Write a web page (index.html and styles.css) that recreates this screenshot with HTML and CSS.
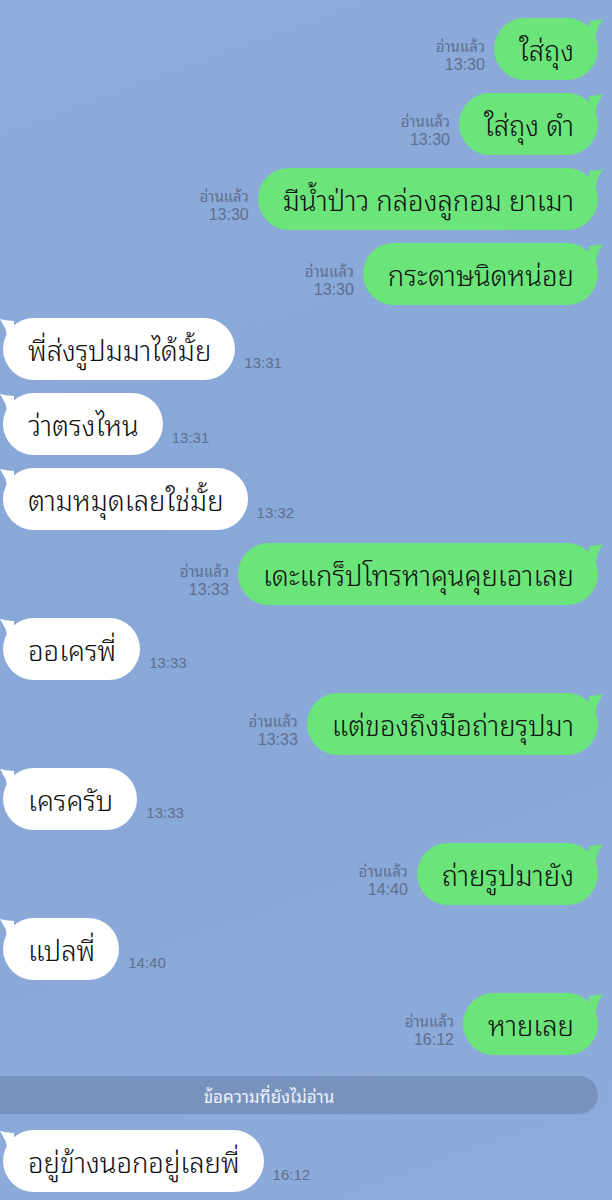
FILE: index.html
```html
<!DOCTYPE html>
<html lang="th">
<head>
  <meta charset="UTF-8" />
  <meta name="viewport" content="width=device-width, initial-scale=1.0" />
  <title>LINE</title>
  <link rel="stylesheet" href="styles.css">
</head>
<body>
  <div class="chat">
    <div class="row out">
      <div class="meta"><span>อ่านแล้ว</span><span>13:30</span></div>
      <div class="bubble">ใส่ถุง</div>
    </div>
    <div class="row out">
      <div class="meta"><span>อ่านแล้ว</span><span>13:30</span></div>
      <div class="bubble">ใส่ถุง ดำ</div>
    </div>
    <div class="row out">
      <div class="meta"><span>อ่านแล้ว</span><span>13:30</span></div>
      <div class="bubble">มีน้ำป่าว กล่องลูกอม ยาเมา</div>
    </div>
    <div class="row out">
      <div class="meta"><span>อ่านแล้ว</span><span>13:30</span></div>
      <div class="bubble">กระดาษนิดหน่อย</div>
    </div>
    <div class="row in">
      <div class="bubble">พี่ส่งรูปมมาได้มั้ย</div>
      <div class="time">13:31</div>
    </div>
    <div class="row in">
      <div class="bubble">ว่าตรงไหน</div>
      <div class="time">13:31</div>
    </div>
    <div class="row in">
      <div class="bubble">ตามหมุดเลยใช่มั้ย</div>
      <div class="time">13:32</div>
    </div>
    <div class="row out">
      <div class="meta"><span>อ่านแล้ว</span><span>13:33</span></div>
      <div class="bubble">เดะแกร็ปโทรหาคุนคุยเอาเลย</div>
    </div>
    <div class="row in">
      <div class="bubble">ออเครพี่</div>
      <div class="time">13:33</div>
    </div>
    <div class="row out">
      <div class="meta"><span>อ่านแล้ว</span><span>13:33</span></div>
      <div class="bubble">แต่ของถึงมือถ่ายรุปมา</div>
    </div>
    <div class="row in">
      <div class="bubble">เครครับ</div>
      <div class="time">13:33</div>
    </div>
    <div class="row out">
      <div class="meta"><span>อ่านแล้ว</span><span>14:40</span></div>
      <div class="bubble">ถ่ายรูปมายัง</div>
    </div>
    <div class="row in">
      <div class="bubble">แปลพี่</div>
      <div class="time">14:40</div>
    </div>
    <div class="row out">
      <div class="meta"><span>อ่านแล้ว</span><span>16:12</span></div>
      <div class="bubble">หายเลย</div>
    </div>
    <div class="unread">ข้อความที่ยังไม่อ่าน</div>
    <div class="row in">
      <div class="bubble">อยู่ข้างนอกอยู่เลยพี่</div>
      <div class="time">16:12</div>
    </div>
  </div>
</body>
</html>
```

FILE: styles.css
```css
body {
  margin: 0;
  height: 1200px;
  overflow: hidden;
  font-family: "Noto Sans Thai Looped", "Noto Serif Thai", "Noto Sans Thai", "Noto Sans", sans-serif;
  background: linear-gradient(160deg, #8eacdb 0%, #88a8d8 40%, #8aa9d8 70%, #8eacda 100%);
}
.chat {
  display: flex;
  flex-direction: column;
  gap: 13px;
  padding-top: 18px;
}
.row {
  display: flex;
  align-items: flex-end;
  gap: 9px;
}
.row.out {
  justify-content: flex-end;
  padding-right: 14px;
}
.row.in {
  padding-left: 3px;
}
.bubble {
  position: relative;
  height: 62px;
  box-sizing: border-box;
  padding: 0 24px 0 25px;
  border-radius: 31px;
  display: flex;
  align-items: center;
  font-size: 27.5px;
  font-weight: 350;
  color: #111;
  white-space: nowrap;
}
.out .bubble {
  background: #6be57a;
}
.in .bubble {
  background: #ffffff;
}
.bubble::before {
  content: "";
  position: absolute;
  top: 1px;
  width: 14px;
  height: 20px;
}
.out .bubble::before {
  right: -5px;
  background: #6be57a;
  clip-path: polygon(0 10%, 60% 6%, 100% 0, 60% 50%, 45% 100%, 0 100%);
}
.in .bubble::before {
  left: -3px;
  background: #ffffff;
  clip-path: polygon(0 0, 40% 6%, 100% 10%, 100% 100%, 55% 100%, 40% 50%);
}
.meta {
  display: flex;
  flex-direction: column;
  align-items: flex-end;
  padding-bottom: 5px;
  color: #5e6f8f;
  line-height: 20px;
}
.meta span:first-child {
  font-size: 15px;
}
.meta span:last-child {
  font-family: "Liberation Sans", sans-serif;
  font-size: 16px;
}
.time {
  color: #5e6f8f;
  font-family: "Liberation Sans", sans-serif;
  font-size: 15px;
  padding-bottom: 9px;
}
.unread {
  margin: 8px 14px 3px 0;
  height: 38px;
  border-radius: 0 19px 19px 0;
  background: rgba(96, 118, 156, 0.45);
  color: #eef2fa;
  font-size: 17px;
  display: flex;
  align-items: center;
  justify-content: center;
  padding-right: 60px;
}
```
